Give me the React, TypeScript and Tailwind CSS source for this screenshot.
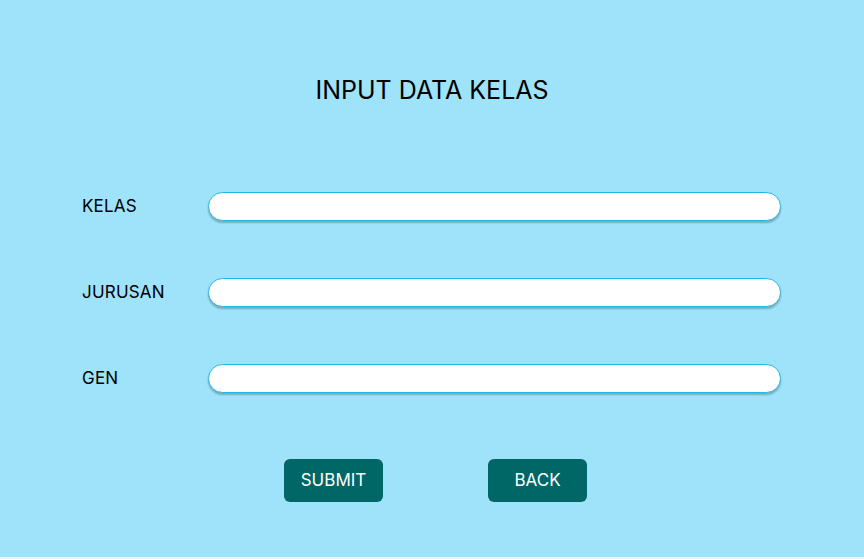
export default function App() {
  const rows = ["KELAS", "JURUSAN", "GEN"];
  return (
    <div className="w-[864px] h-[559px] bg-[#e6f7fd] font-['Inter',sans-serif]">
      <div className="h-[557px] bg-[#9fe3fa] flex flex-col">
        <h1 className="pt-[74px] text-center text-[25px] leading-[32px] text-black font-normal">INPUT DATA KELAS</h1>
        <div className="mt-[86px] flex flex-col gap-[57px]">
          {rows.map((r) => (
            <div key={r} className="flex items-center h-[29px]">
              <div className="w-[208px] shrink-0 pl-[82px] text-[17px] tracking-[0.2px] text-black">{r}</div>
              <input className="w-[573px] h-[29px] rounded-full bg-white border border-[#22b8e6] shadow-[0_2px_2px_rgba(0,0,0,0.25)] outline-none" />
            </div>
          ))}
        </div>
        <div className="mt-[66px] flex justify-start pl-[284px] gap-[105px]">
          <button className="w-[99px] h-[43px] rounded-[6px] bg-[#006766] text-white text-[17px]">SUBMIT</button>
          <button className="w-[99px] h-[43px] rounded-[6px] bg-[#006766] text-white text-[17px]">BACK</button>
        </div>
      </div>
    </div>
  );
}
